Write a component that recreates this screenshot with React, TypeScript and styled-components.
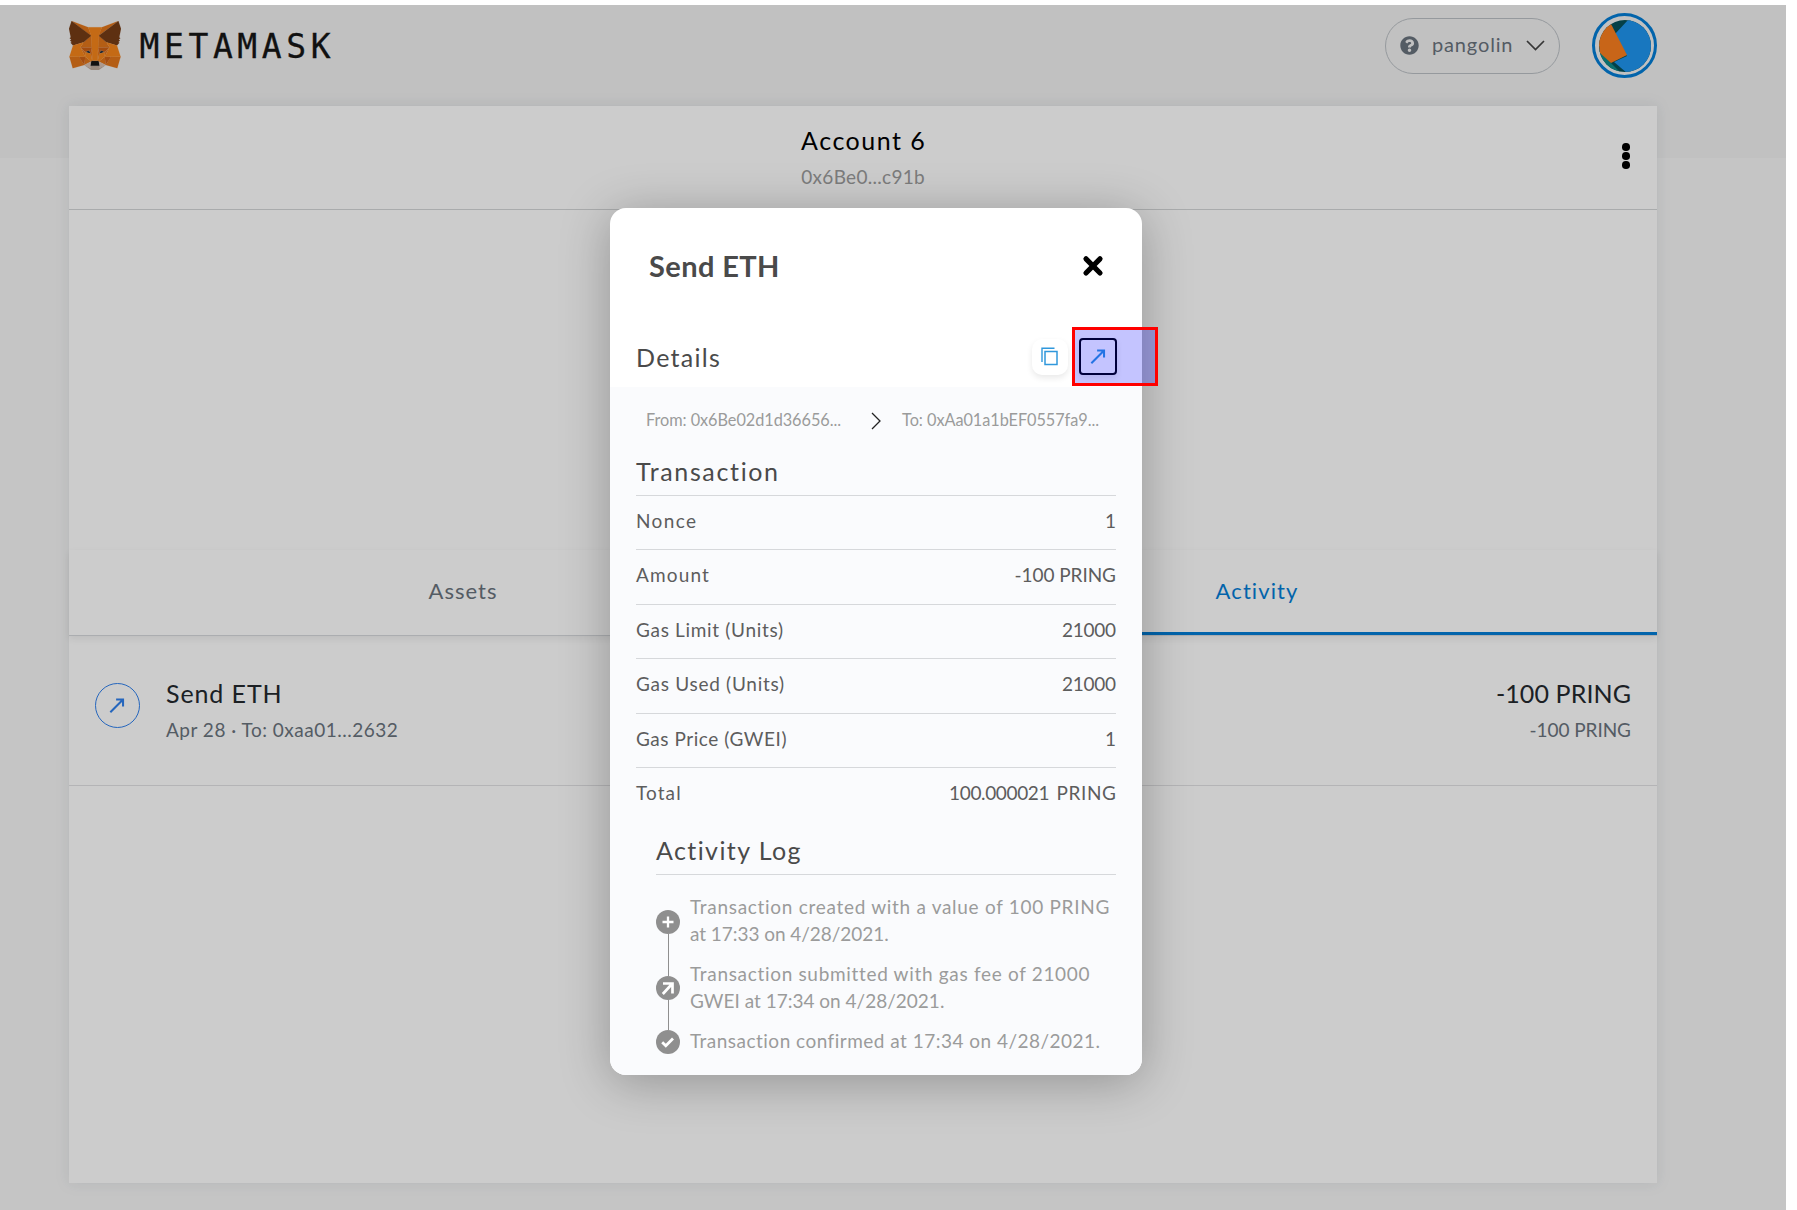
import React from "react";
import styled, { createGlobalStyle } from "styled-components";

const Global = createGlobalStyle`
  * { box-sizing: border-box; }
  body { margin: 0; background: #fff; font-family: Lato, "Open Sans", sans-serif; color: #24292e; overflow: hidden; }
`;

/* ---------- text ---------- */

const Text = styled.span<{ $size: number; $line?: number; $track?: number; $color?: string; $weight?: number }>`
  display: block;
  font-size: ${(p) => p.$size}px;
  line-height: ${(p) => p.$line ?? 28}px;
  letter-spacing: ${(p) => p.$track ?? 0}px;
  margin-right: ${(p) => -(p.$track ?? 0)}px;
  color: ${(p) => p.$color ?? "inherit"};
  font-weight: ${(p) => p.$weight ?? 400};
  white-space: nowrap;
`;

/* ---------- page ---------- */

const Screen = styled.div`
  position: relative;
  width: 1797px;
  height: 1210px;
  padding-top: 5px;
  overflow: hidden;
`;

const Page = styled.div`
  position: relative;
  width: 1786px;
  height: 1205px;
  background: linear-gradient(#f2f2f2 153px, #f7f7f7 153px);
`;

const Header = styled.header`
  display: flex;
  align-items: center;
  height: 81px;
  margin-bottom: 20px;
  padding: 0 129px 0 69px;
`;

const Wordmark = styled.div`
  margin-left: 18.5px;
  padding-top: 2px;
  font-family: "DejaVu Sans Mono", monospace;
  font-size: 33px;
  line-height: 40px;
  letter-spacing: 4.6px;
  color: #161616;
  -webkit-text-stroke: 0.3px #161616;
`;

const NetworkPill = styled.div`
  display: flex;
  align-items: center;
  width: 175px;
  height: 56px;
  margin-left: auto;
  padding: 0 14px;
  border: 1px solid #bbc0c5;
  border-radius: 28px;
  color: #6a737d;
`;

const NetworkName = styled(Text)`
  flex: 1;
  padding-left: 13px;
  padding-bottom: 4px;
`;

const Avatar = styled.div`
  display: flex;
  align-items: center;
  justify-content: center;
  width: 65px;
  height: 65px;
  margin-left: 32px;
  border: 3px solid #037dd6;
  border-radius: 50%;
  background: #f2f2f2;
`;

const Card = styled.main`
  display: flex;
  flex-direction: column;
  width: 1588px;
  height: 1077px;
  margin-left: 69px;
  background: #fff;
  box-shadow: 0 0 14px 1px rgba(36, 60, 80, 0.09);
`;

const AccountBar = styled.section`
  display: grid;
  grid-template-columns: 1fr auto 1fr;
  height: 104px;
  padding-top: 16px;
  border-bottom: 1px solid #d4d6d8;
`;

const AccountInfo = styled.div`
  grid-column: 2;
  display: flex;
  flex-direction: column;
  align-items: center;
  gap: 5px;
`;

const Kebab = styled.div`
  display: flex;
  flex-direction: column;
  align-items: center;
  justify-self: end;
  gap: 1.4px;
  margin: 21px 27px 0 0;
`;

const Dot = styled.i`
  width: 7.6px;
  height: 7.6px;
  border-radius: 50%;
  background: #000;
`;

const Balance = styled.div`
  height: 340px;
`;

const Tabs = styled.nav`
  display: flex;
  height: 86px;
  border-bottom: 1px solid #d6d9dc;
  box-shadow: 0 3px 7px rgba(0, 0, 0, 0.07);
`;

const Tab = styled.div<{ $active?: boolean }>`
  display: flex;
  flex: 1;
  justify-content: center;
  padding-right: 7px;
  color: ${(p) => (p.$active ? "#037dd6" : "#6a737d")};
  border-bottom: ${(p) => (p.$active ? "3px solid #037dd6" : "none")};
`;

const Item = styled.article`
  display: flex;
  height: 150px;
  padding: 40px 26px 0 26px;
  border-bottom: 1px solid #e1e2e4;
`;

const SendBadge = styled.div`
  display: flex;
  align-items: center;
  justify-content: center;
  width: 45px;
  height: 45px;
  margin-top: 7px;
  padding-right: 2px;
  border: 1.5px solid #2f80ed;
  border-radius: 50%;
`;

const ItemLines = styled.div<{ $end?: boolean }>`
  display: flex;
  flex-direction: column;
  align-items: ${(p) => (p.$end ? "flex-end" : "flex-start")};
  gap: 6px;
  margin-left: ${(p) => (p.$end ? "auto" : "26px")};
`;

const Scrim = styled.div`
  position: absolute;
  inset: 0;
  display: flex;
  justify-content: center;
  align-items: flex-start;
  padding: 203px 34px 0 0;
  background: rgba(0, 0, 0, 0.2);
`;

/* ---------- dialog ---------- */

const Dialog = styled.section`
  display: flex;
  flex-direction: column;
  width: 532px;
  height: 867px;
  border-radius: 16px;
  background: #fff;
  overflow: hidden;
  box-shadow: 0 7px 50px rgba(0, 0, 0, 0.28);
  color: #4a4a4a;
`;

const DialogHead = styled.div`
  display: flex;
  align-items: center;
  justify-content: space-between;
  height: 87px;
  padding: 29px 38px 0 39px;
`;

const DetailsBar = styled.div`
  display: flex;
  align-items: center;
  height: 92px;
  padding: 43px 25px 12px 26px;
`;

const IconButton = styled.button<{ $focused?: boolean }>`
  display: flex;
  align-items: center;
  justify-content: center;
  width: ${(p) => (p.$focused ? 38 : 36)}px;
  height: ${(p) => (p.$focused ? 37 : 36)}px;
  padding: 0;
  background: #fff;
  border: ${(p) => (p.$focused ? "2px solid #000" : "none")};
  border-radius: ${(p) => (p.$focused ? 4 : 10)}px;
  box-shadow: 0 3px 6px rgba(0, 0, 0, 0.09);
`;

const IconButtons = styled.div`
  display: flex;
  align-items: center;
  gap: 11px;
  margin-left: auto;
`;

const DialogBody = styled.div`
  flex: 1;
  padding: 18px 26px 0;
  background: #fafbfd;
`;

const Route = styled.div`
  display: flex;
  align-items: center;
  height: 30px;
  margin-bottom: 18px;
  padding-left: 10px;
  color: #9b9b9b;
`;

const RouteArrow = styled.svg`
  margin: 1px 21px 0 30px;
`;

const Heading = styled.div<{ $inset?: boolean }>`
  height: 43px;
  margin-left: ${(p) => (p.$inset ? 20 : 0)}px;
  border-bottom: 1px solid #d6d8db;
`;

const Row = styled.div<{ $last?: boolean }>`
  display: flex;
  align-items: flex-start;
  justify-content: space-between;
  height: ${(p) => (p.$last ? 64 : 54.4)}px;
  border-bottom: ${(p) => (p.$last ? "none" : "1px solid #d6d8db")};
  color: #5d5d5d;
`;

const Amounts = styled.div`
  display: flex;
  gap: 7px;
`;

const Log = styled.div`
  display: flex;
  gap: 10px;
  padding: 18px 0 0 20px;
`;

const Rail = styled.div`
  display: flex;
  flex-direction: column;
  align-items: center;
  padding-top: 17px;
`;

const Link = styled.i<{ $h: number }>`
  width: 1px;
  height: ${(p) => p.$h}px;
  background: #8f8f8f;
`;

const Entries = styled.div`
  display: flex;
  flex-direction: column;
  gap: 13px;
  color: #9b9b9b;
`;

const Marker = styled.div`
  position: absolute;
  left: 1072px;
  top: 327px;
  width: 86px;
  height: 59px;
  border: 3px solid #ff0000;
  background: rgba(0, 0, 255, 0.23);
`;

/* ---------- drawings ---------- */

const foxFacets: [string, string[]][] = [
  ["#E2761B", [
    "274.1,35.5 174.6,109.4 193,65.8", "44.4,35.5 143.1,110.1 125.6,65.8",
    "238.3,206.8 211.8,247.4 268.5,263 284.8,207.7", "33.9,207.7 50.1,263 106.8,247.4 80.3,206.8",
    "103.6,138.2 87.8,162.1 144.1,164.6 142.1,104.1", "214.9,138.2 175.9,103.4 174.6,164.6 230.8,162.1",
    "106.8,247.4 140.6,230.9 111.4,208.1", "177.9,230.9 211.8,247.4 207.1,208.1",
  ]],
  ["#D7C1B3", ["211.8,247.4 177.9,230.9 180.6,253 180.3,262.3", "106.8,247.4 138.3,262.3 138.1,253 140.6,230.9"]],
  ["#233447", ["138.8,193.5 110.6,185.2 130.5,176.1", "179.7,193.5 188,176.1 208,185.2"]],
  ["#CD6116", [
    "106.8,247.4 111.6,206.8 80.3,207.7", "207,206.8 211.8,247.4 238.3,207.7",
    "230.8,162.1 174.6,164.6 179.8,193.5 188.1,176.1 208.1,185.2",
    "110.6,185.2 130.6,176.1 138.8,193.5 144.1,164.6 87.8,162.1",
  ]],
  ["#E4751F", [
    "87.8,162.1 111.4,208.1 110.6,185.2", "208.1,185.2 207.1,208.1 230.8,162.1",
    "144.1,164.6 138.8,193.5 145.4,227.6 146.9,182.7", "174.6,164.6 171.9,182.6 173.1,227.6 179.8,193.5",
  ]],
  ["#F6851B", [
    "179.8,193.5 173.1,227.6 177.9,230.9 207.1,208.1 208.1,185.2",
    "110.6,185.2 111.4,208.1 140.6,230.9 145.4,227.6 138.8,193.5",
  ]],
  ["#C0AD9E", ["180.3,262.3 180.6,253 178.1,250.8 140.4,250.8 138.1,253 138.3,262.3 106.8,247.4 117.8,256.4 140.1,271.9 178.4,271.9 200.8,256.4 211.8,247.4"]],
  ["#161616", ["177.9,230.9 173.1,227.6 145.4,227.6 140.6,230.9 138.1,253 140.4,250.8 178.1,250.8 180.6,253"]],
  ["#763D16", [
    "278.3,114.2 286.8,73.4 274.1,35.5 177.9,106.9 214.9,138.2 267.2,153.5 278.8,140 273.8,136.4 281.8,129.1 275.6,124.3 283.6,118.2",
    "31.8,73.4 40.3,114.2 34.9,118.2 42.9,124.3 36.8,129.1 44.8,136.4 39.8,140 51.3,153.5 103.6,138.2 140.6,106.9 44.4,35.5",
  ]],
  ["#F6851B", [
    "267.2,153.5 214.9,138.2 230.8,162.1 207.1,208.1 238.3,207.7 284.8,207.7",
    "103.6,138.2 51.3,153.5 33.9,207.7 80.3,207.7 111.4,208.1 87.8,162.1",
    "174.6,164.6 177.9,106.9 193.1,65.8 125.6,65.8 140.6,106.9 144.1,164.6 145.3,182.8 145.4,227.6 173.1,227.6 173.3,182.8",
  ]],
];

const Fox = () => (
  <svg width="52" height="49" viewBox="31.8 35.5 255 236.4" preserveAspectRatio="none">
    {foxFacets.map(([fill, shapes]) => shapes.map((s) => <polygon key={s} points={s} fill={fill} stroke={fill} strokeWidth="0.6" />))}
  </svg>
);

const Help = () => (
  <svg width="19" height="19" viewBox="0 0 512 512" fill="#6a737d">
    <path d="M504 256c0 137-111 248-248 248S8 393 8 256C8 119.100 119 8 256 8s248 111.100 248 248zM262.700 90c-54.500 0-89.300 23-116.500 63.800-3.500 5.300-2.400 12.400 2.700 16.300l34.700 26.300c5.200 3.900 12.600 3 16.700-2.100 17.900-22.700 30.100-35.800 57.300-35.800 20.400 0 45.700 13.100 45.700 33 0 15-12.400 22.700-32.500 34C247.100 238.500 216 254.900 216 296v4c0 6.600 5.400 12 12 12h56c6.600 0 12-5.400 12-12v-1.300c0-28.500 83.200-29.600 83.200-106.700 0-58-60.200-102-116.500-102zM256 338c-25.400 0-46 20.600-46 46 0 25.400 20.600 46 46 46s46-20.600 46-46c0-25.400-20.600-46-46-46z" />
  </svg>
);

const ChevronDown = () => (
  <svg width="19" height="12" viewBox="0 0 19 12" fill="none" stroke="#444" strokeWidth="1.7">
    <path d="M1 1 9.500 9.500 18 1" />
  </svg>
);

const Identicon = () => (
  <svg width="52" height="52" viewBox="0 0 52 52">
    <clipPath id="disc"><circle cx="26" cy="26" r="26" /></clipPath>
    <g clipPath="url(#disc)">
      <rect width="52" height="52" fill="#05505a" />
      <path d="M29 0 16 14 28 36 15 42 28 53 60 60 60-5z" fill="#1e95ef" />
      <path d="M0 30 12 43 27 58 0 58z" fill="#0d8a8a" />
      <path d="M-2 10 12 4 28 35 12 43 1 33z" fill="#fa7f1f" />
    </g>
  </svg>
);

const Close = () => (
  <svg width="22" height="22" viewBox="0 0 22 22" stroke="#000" strokeWidth="5.200" strokeLinecap="round">
    <path d="M4 3.800 18 18M18 3.800 4 18" />
  </svg>
);

const CopyGlyph = () => (
  <svg width="18" height="19" viewBox="0 0 18 19" fill="none" stroke="#3098dc">
    <path d="M1 15V1.200H13.500" strokeWidth="1.400" />
    <rect x="4" y="4.500" width="12" height="13" strokeWidth="1.500" />
  </svg>
);

const SendArrow = ({ color = "#2f80ed" }: { color?: string }) => (
  <svg width="16" height="17" viewBox="0 0 18 18" fill="none" stroke={color} strokeWidth="2.300">
    <path d="M1.500 16.500 15.500 2.500M8 2.200H15.800V10" />
  </svg>
);

const LogIcon = ({ children }: { children: React.ReactNode }) => (
  <svg width="24" height="24" viewBox="0 0 24 24" fill="none" stroke="#fff" strokeWidth="2.300">
    <circle cx="12" cy="12" r="12" fill="#8f8f8f" stroke="none" />
    {children}
  </svg>
);

/* ---------- data ---------- */

const rows = [
  { label: "Nonce", lt: 1.4, value: "1", vt: 0 },
  { label: "Amount", lt: 1.15, value: "-100 PRING", vt: -0.05 },
  { label: "Gas Limit (Units)", lt: 0.68, value: "21000", vt: -0.25 },
  { label: "Gas Used (Units)", lt: 0.72, value: "21000", vt: -0.25 },
  { label: "Gas Price (GWEI)", lt: 0.54, value: "1", vt: 0 },
];

const entries = [
  [["Transaction created with a value of 100 PRING", 0.7], ["at 17:33 on 4/28/2021.", -0.05]],
  [["Transaction submitted with gas fee of 21000", 0.68], ["GWEI at 17:34 on 4/28/2021.", 0]],
  [["Transaction confirmed at 17:34 on 4/28/2021.", 0.48]],
] as [string, number][][];

export default function App() {
  return (
    <Screen>
      <Global />
      <Page>
        <Header>
          <Fox />
          <Wordmark>METAMASK</Wordmark>
          <NetworkPill>
            <Help />
            <NetworkName $size={20} $track={0.85}>pangolin</NetworkName>
            <ChevronDown />
          </NetworkPill>
          <Avatar><Identicon /></Avatar>
        </Header>
        <Card>
          <AccountBar>
            <AccountInfo>
              <Text $size={25} $line={36} $track={1.5} $color="#000">Account 6</Text>
              <Text $size={19} $track={0.3} $color="#9b9b9b">0x6Be0...c91b</Text>
            </AccountInfo>
            <Kebab><Dot /><Dot /><Dot /></Kebab>
          </AccountBar>
          <Balance />
          <Tabs>
            <Tab><Text $size={22} $line={82} $track={1}>Assets</Text></Tab>
            <Tab $active><Text $size={22} $line={82} $track={1.1}>Activity</Text></Tab>
          </Tabs>
          <Item>
            <SendBadge><SendArrow /></SendBadge>
            <ItemLines>
              <Text $size={25} $line={34} $track={0.9}>Send ETH</Text>
              <Text $size={19} $track={0.5} $color="#6a737d">Apr 28 · To: 0xaa01...2632</Text>
            </ItemLines>
            <ItemLines $end>
              <Text $size={25} $line={34} $track={0.1}>-100 PRING</Text>
              <Text $size={19} $track={-0.05} $color="#6a737d">-100 PRING</Text>
            </ItemLines>
          </Item>
        </Card>
        <Scrim>
          <Dialog>
            <DialogHead>
              <Text $size={29} $line={58} $track={0.4} $weight={700}>Send ETH</Text>
              <Close />
            </DialogHead>
            <DetailsBar>
              <Text $size={25} $line={36} $track={1.3}>Details</Text>
              <IconButtons>
                <IconButton><CopyGlyph /></IconButton>
                <IconButton $focused><SendArrow color="#3098dc" /></IconButton>
              </IconButtons>
            </DetailsBar>
            <DialogBody>
              <Route>
                <Text $size={16.3} $track={-0.05}>From: 0x6Be02d1d36656...</Text>
                <RouteArrow width="10" height="18" viewBox="0 0 10 18" fill="none" stroke="#222" strokeWidth="1.300">
                  <path d="M1 1 9 9 1 17" />
                </RouteArrow>
                <Text $size={16.3} $track={-0.05}>To: 0xAa01a1bEF0557fa9...</Text>
              </Route>
              <Heading><Text $size={25} $line={36} $track={1.65}>Transaction</Text></Heading>
              {rows.map((r) => (
                <Row key={r.label}>
                  <Text $size={19} $line={49} $track={r.lt}>{r.label}</Text>
                  <Text $size={19} $line={49} $track={r.vt}>{r.value}</Text>
                </Row>
              ))}
              <Row $last>
                <Text $size={19} $line={49} $track={1.1}>Total</Text>
                <Amounts>
                  <Text $size={19} $line={49} $track={-0.35}>100.000021</Text>
                  <Text $size={19} $line={49} $track={0.6}>PRING</Text>
                </Amounts>
              </Row>
              <Heading $inset><Text $size={25} $line={36} $track={1.4}>Activity Log</Text></Heading>
              <Log>
                <Rail>
                  <LogIcon><path d="M12 6.500v11M6.500 12h11" /></LogIcon>
                  <Link $h={42} />
                  <LogIcon><path d="M6.800 18 15.500 8.500M7 7.500H16.500V17.500" strokeWidth="2.700" /></LogIcon>
                  <Link $h={30} />
                  <LogIcon><path d="M6.200 12.200 9.800 15.700 17 8.500" strokeWidth="2.800" /></LogIcon>
                </Rail>
                <Entries>
                  {entries.map((lines, i) => (
                    <div key={i}>
                      {lines.map(([t, track]) => <Text key={t} $size={19} $line={27} $track={track}>{t}</Text>)}
                    </div>
                  ))}
                </Entries>
              </Log>
            </DialogBody>
          </Dialog>
        </Scrim>
      </Page>
      <Marker />
    </Screen>
  );
}
